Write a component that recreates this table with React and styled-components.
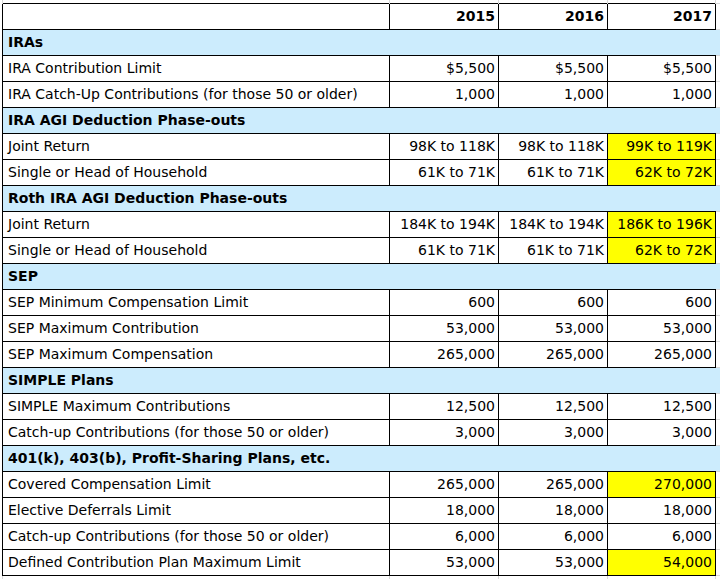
import React from "react";
import styled, { createGlobalStyle } from "styled-components";

const GlobalStyle = createGlobalStyle`
  html, body {
    margin: 0;
    padding: 0;
    background: #ffffff;
  }
  body {
    font-family: "DejaVu Sans", "Liberation Sans", sans-serif;
    color: #000000;
    overflow: hidden;
  }
`;

const sections = [
  {
    title: "IRAs",
    rows: [
      { label: "IRA Contribution Limit", values: ["$5,500", "$5,500", "$5,500"] },
      {
        label: "IRA Catch-Up Contributions (for those 50 or older)",
        values: ["1,000", "1,000", "1,000"],
      },
    ],
  },
  {
    title: "IRA AGI Deduction Phase-outs",
    rows: [
      { label: "Joint Return", values: ["98K to 118K", "98K to 118K", "99K to 119K"], changed: true },
      {
        label: "Single or Head of Household",
        values: ["61K to 71K", "61K to 71K", "62K to 72K"],
        changed: true,
      },
    ],
  },
  {
    title: "Roth IRA AGI Deduction Phase-outs",
    rows: [
      {
        label: "Joint Return",
        values: ["184K to 194K", "184K to 194K", "186K to 196K"],
        changed: true,
      },
      {
        label: "Single or Head of Household",
        values: ["61K to 71K", "61K to 71K", "62K to 72K"],
        changed: true,
      },
    ],
  },
  {
    title: "SEP",
    rows: [
      { label: "SEP Minimum Compensation Limit", values: ["600", "600", "600"] },
      { label: "SEP Maximum Contribution", values: ["53,000", "53,000", "53,000"] },
      { label: "SEP Maximum Compensation", values: ["265,000", "265,000", "265,000"] },
    ],
  },
  {
    title: "SIMPLE Plans",
    rows: [
      { label: "SIMPLE Maximum Contributions", values: ["12,500", "12,500", "12,500"] },
      {
        label: "Catch-up Contributions (for those 50 or older)",
        values: ["3,000", "3,000", "3,000"],
      },
    ],
  },
  {
    title: "401(k), 403(b), Profit-Sharing Plans, etc.",
    rows: [
      {
        label: "Covered Compensation Limit",
        values: ["265,000", "265,000", "270,000"],
        changed: true,
      },
      { label: "Elective Deferrals Limit", values: ["18,000", "18,000", "18,000"] },
      {
        label: "Catch-up Contributions (for those 50 or older)",
        values: ["6,000", "6,000", "6,000"],
      },
      {
        label: "Defined Contribution Plan Maximum Limit",
        values: ["53,000", "53,000", "54,000"],
        changed: true,
      },
    ],
  },
];

const years = ["2015", "2016", "2017"];

function App() {
  return (
    <>
      <GlobalStyle />
      <Sheet>
        <Table>
          <colgroup>
            <col style={{ width: 387 }} />
            <col style={{ width: 109 }} />
            <col style={{ width: 109 }} />
            <col style={{ width: 108 }} />
            <col style={{ width: 5 }} />
          </colgroup>
          <tbody>
            <EdgeRow>
              <EdgeCell />
              <EdgeCell />
              <EdgeCell />
              <EdgeCell />
              <EdgeCell />
            </EdgeRow>
            <Row>
              <LabelCell />
              {years.map((y) => (
                <YearCell key={y}>{y}</YearCell>
              ))}
              <Gutter />
            </Row>
            {sections.map((section) => (
              <React.Fragment key={section.title}>
                <Row>
                  <SectionCell colSpan={5}>{section.title}</SectionCell>
                </Row>
                {section.rows.map((row, i) => (
                  <Row key={section.title + i}>
                    <LabelCell>{row.label}</LabelCell>
                    {row.values.map((v, j) => (
                      <ValueCell key={j} $highlight={row.changed && j === 2}>
                        {v}
                      </ValueCell>
                    ))}
                    <Gutter />
                  </Row>
                ))}
              </React.Fragment>
            ))}
            <TailRow>
              <TailCell />
              <TailCell />
              <TailCell />
              <TailCell />
              <TailCell />
            </TailRow>
          </tbody>
        </Table>
      </Sheet>
    </>
  );
}

export default App;

const Sheet = styled.div`
  width: 720px;
  height: 579px;
  overflow: hidden;
  padding-left: 2px;
  box-sizing: border-box;
`;

const Table = styled.table`
  border-collapse: collapse;
  table-layout: fixed;
  width: 718px;
  font-size: 14px;
`;

const Row = styled.tr`
  height: 26px;
`;

const EdgeRow = styled.tr`
  height: 3px;
`;

const TailRow = styled.tr`
  height: 10px;
`;

const EdgeCell = styled.td`
  padding: 0;
  border-left: 1px solid #d9d9d9;
  border-right: 1px solid #d9d9d9;
`;

const TailCell = styled.td`
  padding: 0;
  border-left: 1px solid #d9d9d9;
  border-right: 1px solid #d9d9d9;
`;

const Cell = styled.td`
  padding: 0 3px 0 5px;
  border: 1px solid #000000;
  white-space: nowrap;
  overflow: hidden;
  line-height: 24px;
  vertical-align: middle;
`;

const LabelCell = styled(Cell)`
  text-align: left;
`;

const YearCell = styled(Cell)`
  text-align: right;
  font-weight: 700;
`;

const ValueCell = styled(Cell)`
  text-align: right;
  background: ${(p) => (p.$highlight ? "#ffff00" : "#ffffff")};
`;

const Gutter = styled.td`
  padding: 0;
  border-top: 1px solid #d9d9d9;
  border-bottom: 1px solid #d9d9d9;
`;

const SectionCell = styled.td`
  padding: 0 5px;
  background: #ccecfd;
  border-left: 1px solid #000000;
  font-weight: 700;
  white-space: nowrap;
  line-height: 24px;
  vertical-align: middle;
`;
